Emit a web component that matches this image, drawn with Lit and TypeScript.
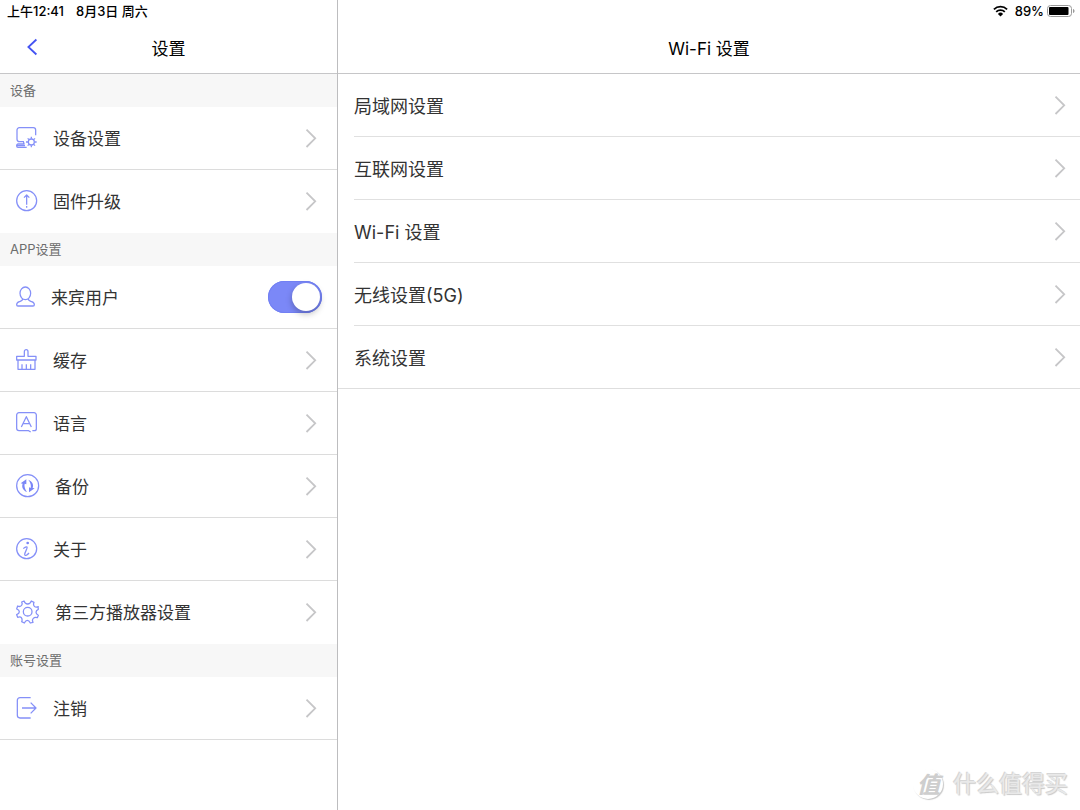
import { LitElement, html, svg, css, TemplateResult } from "lit";
import { customElement, property, state } from "lit/decorators.js";

type IconName =
  | "device" | "upgrade" | "user" | "cache" | "language"
  | "backup" | "about" | "player" | "logout";

/* Outlines on a 66-unit grid unless the glyph needs another box. */
const ICONS: Record<IconName, { size: number; box: string; art: TemplateResult }> = {
  device: {
    size: 22,
    box: "0 0 66 66",
    art: svg`
      <path d="M24 44H10a7 7 0 0 1-7-7V9a7 7 0 0 1 7-7h42a7 7 0 0 1 7 7v16"/>
      <path d="M23 45v6M26 51H6a4 4 0 0 0-4 4v2a4 4 0 0 0 4 4h26M2 56h25"/>
      <circle cx="46" cy="45" r="9"/>
      <path d="M46 35v-6M46 55v6M36 45h-6M56 45h6M39 38l-4-4M53 52l4 4M53 38l4-4M39 52l-4 4"/>`,
  },
  upgrade: {
    size: 22,
    box: "0 0 66 66",
    art: svg`<circle cx="32" cy="32" r="30"/><path d="M32 44V15M24 23l8-8 8 8M32 48v5"/>`,
  },
  user: {
    size: 20,
    box: "0 0 60 66",
    art: svg`<ellipse cx="28" cy="22" rx="16" ry="19"/>
      <path d="M20 39c0 5-4 6-10 8-6 2-8 5-8 9 0 3 1 4 4 4h45c3 0 4-1 4-4 0-4-2-7-8-9-6-2-10-3-10-8"/>`,
  },
  cache: {
    size: 22,
    box: "0 0 66 66",
    art: svg`<path d="M2 33V22h23V8c0-8 11-8 11 0v14h24v11zM6 33v28h51V33M18 46v15M31 46v15M44 46v15"/>`,
  },
  language: {
    size: 22,
    box: "0 0 66 66",
    art: svg`<path d="M49 56h6a6 6 0 0 0 6-6V9a7 7 0 0 0-7-7H9a7 7 0 0 0-7 7v40a7 7 0 0 0 7 7h29l6 4"/>
      <path d="M16 45l15-31 15 31M21 35h20"/>`,
  },
  backup: {
    size: 24,
    box: "0 0 72 72",
    art: svg`<circle cx="35" cy="35" r="33"/>
      <path class="solid" d="M14 28l17-12v15l-5-2c-2 8 1 16 7 25-12-5-17-15-13-25z"/>
      <path class="solid" d="M56 43L39 55V40l5 2c2-8 0-15-7-25 12 5 17 15 13 25z"/>`,
  },
  about: {
    size: 22,
    box: "0 0 66 66",
    art: svg`<circle cx="32" cy="32" r="30"/>
      <path d="M22 32c4-4 10-7 11-5 3 3-8 17-7 23 1 5 8 1 13-5"/><circle class="solid" cx="35" cy="15" r="4"/>`,
  },
  player: {
    size: 24,
    box: "0 0 72 72",
    art: svg`<circle cx="35" cy="35" r="13"/>
      <path d="M24 3c3 8 6 9 11 9s8-1 11-9l8 4c-3 7-2 9 1 12s6 4 12 1l-1 0 1 8c-7 3-7 5-7 9s1 6 7 9l-3 7c-7-2-9-1-12 2s-4 6-1 12l-8 2c-3-6-5-8-9-8s-6 2-9 8l-8-4c3-6 1-9-1-12s-6-3-11-1l-3-8c6-3 8-5 8-9s-2-6-8-8l3-9c6 3 8 2 11-1s4-5 1-11z"/>`,
  },
  logout: {
    size: 22,
    box: "0 0 66 66",
    art: svg`<path d="M44 2H12a8 8 0 0 0-8 8v45a8 8 0 0 0 8 8h32M18 33h42M44 17l16 16-16 16"/>`,
  },
};

interface Item { icon: IconName; label: string; toggle?: boolean }
interface Group { title: string; items: Item[] }

const GROUPS: Group[] = [
  {
    title: "设备",
    items: [
      { icon: "device", label: "设备设置" },
      { icon: "upgrade", label: "固件升级" },
    ],
  },
  {
    title: "APP设置",
    items: [
      { icon: "user", label: "来宾用户", toggle: true },
      { icon: "cache", label: "缓存" },
      { icon: "language", label: "语言" },
      { icon: "backup", label: "备份" },
      { icon: "about", label: "关于" },
      { icon: "player", label: "第三方播放器设置" },
    ],
  },
  { title: "账号设置", items: [{ icon: "logout", label: "注销" }] },
];

const NETWORK = ["局域网设置", "互联网设置", "Wi-Fi 设置", "无线设置(5G)", "系统设置"];

const chevron = html`<svg class="chevron" viewBox="0 0 12 20" aria-hidden="true"><path d="M1.5 1.6L10.2 10.3l-8.7 8.7"/></svg>`;

const rowStyles = css`
  * { box-sizing: border-box; }
  button {
    appearance: none;
    border: 0;
    margin: 0;
    background: none;
    font: inherit;
    color: inherit;
    text-align: left;
    cursor: pointer;
  }
  .label { padding-bottom: 2px; }
  .chevron {
    flex: none;
    width: 12px;
    height: 20px;
    margin-left: auto;
    fill: none;
    stroke: #c6c6c8;
    stroke-width: 1.8;
  }
`;

@customElement("menu-icon")
class MenuIcon extends LitElement {
  @property() name: IconName = "device";

  static styles = css`
    :host { display: block; flex: none; }
    svg {
      display: block;
      fill: none;
      stroke: #8590f8;
      stroke-width: 3.8;
      stroke-linejoin: round;
    }
    .solid { fill: #7a86f7; stroke: none; }
  `;

  render() {
    const { size, box, art } = ICONS[this.name];
    const h = Math.max(size, 22);
    return html`<svg width=${size} height=${h} viewBox=${box} aria-hidden="true">${art}</svg>`;
  }
}

@customElement("settings-menu")
class SettingsMenu extends LitElement {
  @state() private guest = true;

  static styles = [
    rowStyles,
    css`
      :host { display: block; }
      h2 {
        margin: 0;
        padding: 0 10px;
        height: 33px;
        line-height: 33px;
        font-size: 13px;
        font-weight: 400;
        color: #6d6d6d;
        background: #f7f7f7;
      }
      ul { margin: 0; padding: 0; list-style: none; }
      li { border-bottom: 1px solid #dcdcdc; }
      .group:not(:last-child) li:last-child { border-bottom-color: transparent; }
      .row {
        display: flex;
        align-items: center;
        gap: 15px;
        width: 100%;
        height: 62px;
        padding: 0 20px 0 16px;
        font-size: 17px;
        color: #333;
      }
      .row.switch { padding-right: 15px; }
      .toggle {
        appearance: none;
        display: flex;
        flex: none;
        justify-content: flex-end;
        width: 54px;
        height: 32px;
        margin: 0 0 0 auto;
        padding: 2px;
        border-radius: 16px;
        background: #7b88f7;
        box-shadow: inset 0 0 0 1px #7280f3;
        cursor: pointer;
      }
      .toggle::before {
        content: "";
        width: 28px;
        height: 28px;
        border-radius: 50%;
        background: #fff;
        box-shadow: 0 3px 6px rgba(0, 0, 0, 0.25);
      }
      .toggle:not(:checked) {
        justify-content: flex-start;
        background: #e5e5ea;
        box-shadow: none;
      }
    `,
  ];

  private onToggle(e: Event) {
    this.guest = (e.target as HTMLInputElement).checked;
  }

  private renderItem(item: Item) {
    const lead = html`<menu-icon .name=${item.icon}></menu-icon><span class="label">${item.label}</span>`;
    return html`<li>
      ${item.toggle
        ? html`<label class="row switch">${lead}
            <input class="toggle" type="checkbox" role="switch" .checked=${this.guest} @change=${this.onToggle}>
          </label>`
        : html`<button class="row" type="button">${lead}${chevron}</button>`}
    </li>`;
  }

  render() {
    return GROUPS.map(
      (g) => html`<section class="group">
        <h2>${g.title}</h2>
        <ul>${g.items.map((i) => this.renderItem(i))}</ul>
      </section>`
    );
  }
}

@customElement("network-list")
class NetworkList extends LitElement {
  static styles = [
    rowStyles,
    css`
      :host { display: block; border-bottom: 1px solid #dedede; }
      ul { margin: 0; padding: 0 0 0 16px; list-style: none; }
      li + li { border-top: 1px solid #e0e0e0; }
      .row {
        display: flex;
        align-items: center;
        width: 100%;
        height: 62px;
        padding: 0 14px 0 0;
        font-size: 18px;
        color: #333;
      }
      .label { padding-bottom: 1px; }
    `,
  ];

  render() {
    return html`<ul>
      ${NETWORK.map((n) => html`<li><button class="row" type="button"><span class="label">${n}</span>${chevron}</button></li>`)}
    </ul>`;
  }
}

@customElement("app-root")
class AppRoot extends LitElement {
  static styles = css`
    * { box-sizing: border-box; }
    :host {
      display: grid;
      grid-template-columns: 338px minmax(0, 1fr);
      position: relative;
      min-height: 100vh;
      background: #fff;
      color: #000;
      font-family: Inter, "Noto Sans CJK SC", sans-serif;
    }
    .side { border-right: 1px solid #bdbdbf; }
    .status {
      display: flex;
      align-items: center;
      gap: 12px;
      height: 22px;
      padding: 0 7px 2px;
      font-size: 13px;
      font-weight: 500;
    }
    .status.end { justify-content: flex-end; gap: 3px; padding: 0 5px 0 0; }
    .wifi { width: 15px; height: 12px; margin-right: 4px; }
    .battery { width: 28px; height: 12px; }
    .bar {
      display: grid;
      grid-template-columns: 64px 1fr 64px;
      align-items: center;
      height: 52px;
      padding-bottom: 1px;
      border-bottom: 1px solid #c6c6c8;
    }
    .bar h1 {
      grid-column: 2;
      margin: 0;
      text-align: center;
      font-size: 17px;
      font-weight: 400;
    }
    .back {
      grid-column: 1;
      display: flex;
      align-items: center;
      justify-content: center;
      height: 44px;
      margin: 0;
      padding: 0;
      border: 0;
      background: none;
      cursor: pointer;
    }
    .back svg {
      width: 12px;
      height: 18px;
      fill: none;
      stroke: #4453f2;
      stroke-width: 1.8;
    }
    .mark {
      position: absolute;
      right: 12px;
      bottom: 10px;
      display: flex;
      align-items: center;
      gap: 10px;
      font-size: 23px;
      line-height: 32px;
      color: #e9e9e9;
      text-shadow: -1px -1px 0 #d6d6d6, 1px 1px 1px #c8c8c8;
      pointer-events: none;
    }
    .seal {
      display: grid;
      place-items: center;
      width: 30px;
      height: 30px;
      border-radius: 50%;
      box-shadow: 1px 1px 1px #c8c8c8;
      font-weight: 500;
      font-style: italic;
      color: #cecece;
      text-shadow: 1px 0 0 #cecece;
    }
  `;

  render() {
    return html`
      <aside class="side">
        <div class="status"><span>上午12:41</span><span>8月3日 周六</span></div>
        <header class="bar">
          <button class="back" type="button" aria-label="返回">
            <svg viewBox="0 0 12 18" aria-hidden="true"><path d="M10.4 1.5L2.4 9l8 7.5"/></svg>
          </button>
          <h1>设置</h1>
        </header>
        <settings-menu></settings-menu>
      </aside>
      <main>
        <div class="status end">
          <svg class="wifi" viewBox="0 0 15 12" aria-hidden="true">
            <path d="M.9 4.3a9.6 9.6 0 0 1 13.2 0M3.2 6.8a6.2 6.2 0 0 1 8.6 0" fill="none" stroke="#000" stroke-width="1.8"/>
            <path d="M7.5 11.6L4.9 8.9a3.7 3.7 0 0 1 5.2 0z"/>
          </svg>
          <span>89%</span>
          <svg class="battery" viewBox="0 0 28 12" aria-hidden="true">
            <rect x=".5" y=".5" width="24" height="11" rx="3" fill="none" stroke="#9a9a9a"/>
            <rect x="2" y="2" width="19.5" height="8" rx="1"/>
            <path d="M26 4c2 .6 2 3.4 0 4z" fill="#9a9a9a"/>
          </svg>
        </div>
        <header class="bar"><h1>Wi-Fi 设置</h1></header>
        <network-list></network-list>
      </main>
      <div class="mark"><span class="seal">值</span><span>什么值得买</span></div>
    `;
  }
}
